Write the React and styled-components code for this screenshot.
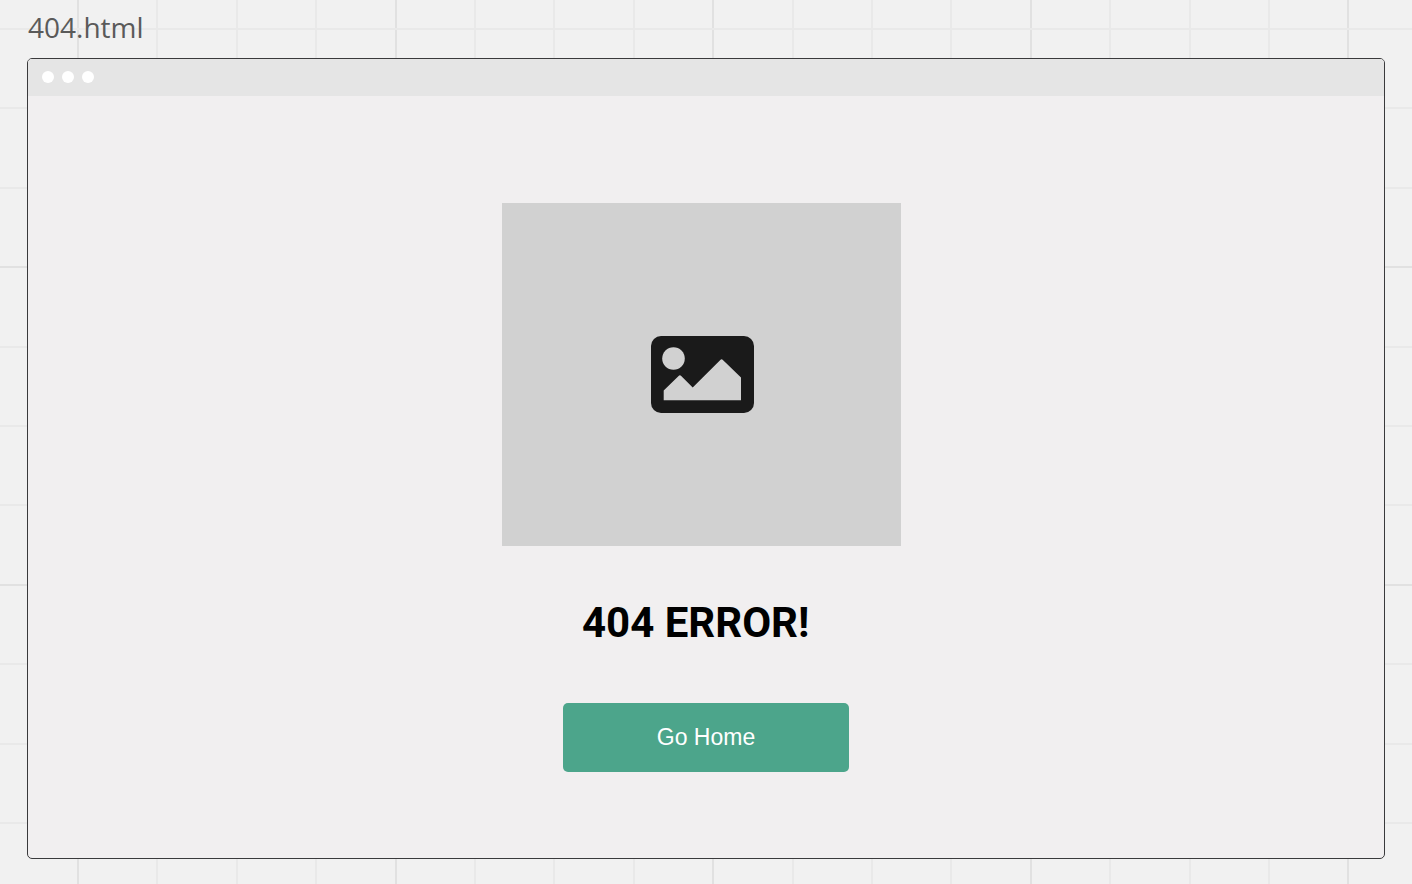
import React from "react";
import styled, { createGlobalStyle } from "styled-components";

const GlobalStyle = createGlobalStyle`
  *, *::before, *::after { box-sizing: border-box; }
  body {
    margin: 0;
    background: #f1f1f1;
  }
`;

const Board = styled.div`
  position: relative;
  display: flex;
  flex-direction: column;
  min-height: 100vh;
  padding: 7px 27px 25px;
  overflow: hidden;
  isolation: isolate;
`;

const GridLines = styled.svg`
  position: absolute;
  inset: 0;
  width: 100%;
  height: 100%;
  z-index: -1;
`;

const FrameTitle = styled.h2`
  margin: 0 0 11px;
  padding: 0 1px;
  font: 400 28px/40px "Open Sans", sans-serif;
  color: #5a5a5a;
`;

const BrowserFrame = styled.section`
  flex: 1;
  display: flex;
  flex-direction: column;
  border: 1px solid #3a3a3c;
  border-radius: 5px;
  background: #f1eff0;
  overflow: hidden;
`;

const TitleBar = styled.div`
  display: flex;
  align-items: center;
  gap: 8px;
  height: 37px;
  padding: 0 14px 1px;
  background: #e5e5e5;
`;

const WindowDot = styled.span`
  width: 12px;
  height: 12px;
  border-radius: 50%;
  background: #fff;
`;

const Content = styled.main`
  display: flex;
  flex-direction: column;
  width: 100%;
  max-width: 408px;
  margin: 0 auto;
  padding: 107px 0 86px;
`;

const ImagePlaceholder = styled.div`
  display: flex;
  align-items: center;
  justify-content: center;
  width: 100%;
  max-width: 399px;
  height: 343px;
  background: #d1d1d1;
`;

const PictureIcon = styled.svg`
  width: 105px;
  height: 77px;
`;

const ErrorHeading = styled.h1`
  margin: 52px 0 56px;
  padding-left: 80px;
  font: 700 42px/49px Roboto, sans-serif;
  color: #000;
  white-space: nowrap;
`;

const HomeButton = styled.button`
  align-self: center;
  width: 286px;
  height: 69px;
  padding: 0 0 2px;
  border: 0;
  border-radius: 5px;
  background: #4ca58b;
  color: #fff;
  font: 400 23px/28px "Liberation Sans", Arial, sans-serif;
  cursor: pointer;
`;

const CELL = 79.4;
const FIRST_COLUMN = 78;
const FIRST_ROW = 29;
const indexes = Array.from({ length: 40 }, (_, i) => i);
const lineColor = (major) => (major ? "#e1e1e1" : "#e9e9e9");

function BoardGrid() {
  return (
    <GridLines aria-hidden="true">
      {indexes.map((i) => (
        <rect
          key={`column-${i}`}
          x={Math.round(FIRST_COLUMN + i * CELL) - 1}
          y="0"
          width="2"
          height="100%"
          fill={lineColor(i % 4 === 0)}
        />
      ))}
      {indexes.map((i) => (
        <rect
          key={`row-${i}`}
          x="0"
          y={Math.round(FIRST_ROW + i * CELL) - 1}
          width="100%"
          height="2"
          fill={lineColor(i % 4 === 3)}
        />
      ))}
    </GridLines>
  );
}

export default function App() {
  return (
    <>
      <GlobalStyle />
      <Board>
        <BoardGrid />
        <FrameTitle>404.html</FrameTitle>
        <BrowserFrame>
          <TitleBar aria-hidden="true">
            <WindowDot />
            <WindowDot />
            <WindowDot />
          </TitleBar>
          <Content>
            <ImagePlaceholder>
              <PictureIcon viewBox="-2 0 105 77" role="img" aria-label="Image placeholder">
                <rect width="103" height="77" rx="10" fill="#1a1a1a" />
                <circle cx="22.5" cy="22.5" r="11.3" fill="#d1d1d1" />
                <path
                  d="M12.7 64.3V54.5L27.6 39.9Q28.9 38.7 30.2 39.9L41.7 51.4L69.3 23.9Q70.6 22.7 71.9 23.9L90 41.6V64.3Z"
                  fill="#d1d1d1"
                />
              </PictureIcon>
            </ImagePlaceholder>
            <ErrorHeading>404 ERROR!</ErrorHeading>
            <HomeButton type="button">Go Home</HomeButton>
          </Content>
        </BrowserFrame>
      </Board>
    </>
  );
}
